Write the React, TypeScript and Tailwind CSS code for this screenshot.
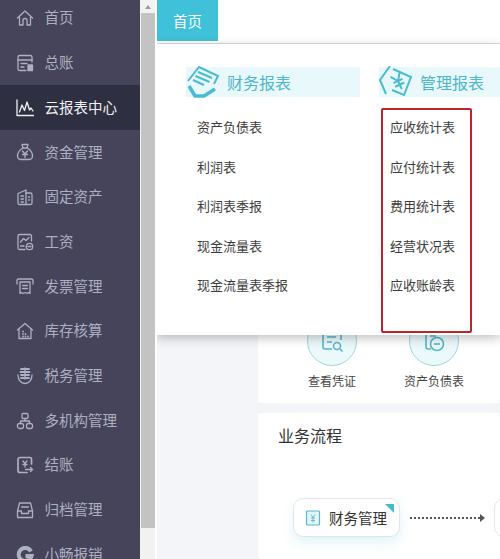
import React from "react";

const S = ({ children }: { children: React.ReactNode }) => (
  <svg width="18" height="18" viewBox="0 0 18 18" fill="none" stroke="currentColor" strokeWidth="1.3" strokeLinejoin="round" strokeLinecap="round">
    {children}
  </svg>
);

const navItems: { label: string; active?: boolean; icon: React.ReactNode }[] = [
  { label: "首页", icon: <S><path d="M1.5 9 9 2l7.5 7" /><path d="M3.5 8v8h3.5v-4.5a2 2 0 0 1 4 0V16h3.5V8" /></S> },
  { label: "总账", icon: <S><path d="M16 8V3a1.5 1.5 0 0 0-1.5-1.5h-11A1.5 1.5 0 0 0 2 3v12a1.5 1.5 0 0 0 1.5 1.5H10" /><path d="M2 6h14M5 9.5h6M5 13h3" /><rect x="12" y="11" width="4.5" height="5.5" fill="currentColor" /></S> },
  { label: "云报表中心", active: true, icon: <S><path d="M1 1v15.5h17" /><path d="M3.5 13 6 6l2.5 5.5L11 3l2.5 8 1.5-2 2 3" /></S> },
  { label: "资金管理", icon: <S><path d="M6 1.5h6L11 5H7z" /><path d="M7 5C3.5 7 1.5 10 1.5 13c0 2.5 2 3.5 4 3.5h7c2 0 4-1 4-3.5 0-3-2-6-5-8" /><path d="M6.5 8 9 11l2.5-3M6.5 11.5h5M9 11v3.5" /></S> },
  { label: "固定资产", icon: <S><path d="M2 5.5 10 2v14.5H3.5A1.5 1.5 0 0 1 2 15z" /><path d="M10 5h4.5A1.5 1.5 0 0 1 16 6.5V15a1.5 1.5 0 0 1-1.5 1.5H10" /><path d="M5 8h2.5M5 11h2.5M5 14h2.5M12.5 9h1M12.5 12h1" /></S> },
  { label: "工资", icon: <S><path d="M15.5 8V3A1.5 1.5 0 0 0 14 1.5H3.5A1.5 1.5 0 0 0 2 3v12a1.5 1.5 0 0 0 1.5 1.5H9" /><path d="m4.5 9 3-3.5 2.5 2L13 4.5M4.5 13H8" /><circle cx="13.5" cy="13.5" r="3.2" /><path d="M12 13.5h3" /></S> },
  { label: "发票管理", icon: <S><path d="M1 7V3.5A1.5 1.5 0 0 1 2.5 2h13A1.5 1.5 0 0 1 17 3.5V7" /><path d="M4 5h10v11.5l-1.5-1-1.5 1-2-1-2 1-1.5-1-1.5 1z" /><path d="M6.5 8.5h5M6.5 11.5h5" /></S> },
  { label: "库存核算", icon: <S><path d="M1.5 8 9 1.5 16.5 8" /><path d="M3 7.5V16.5h12V7.5" /><path d="M7 9.5h.01M7 12h.01M7 14.5h.01M9.5 12h.01M9.5 14.5h.01M12 14.5h.01" strokeWidth="1.8" /></S> },
  { label: "税务管理", icon: <S><path d="M2 8c0 5 3 8.500 7 8.500s7-3.500 7-8.500" /><path d="M5 2h8M4.500 5h9M5 8h8M5 11h8" strokeWidth="1.800" /><path d="M9 1v11" /></S> },
  { label: "多机构管理", icon: <S><rect x="6" y="1.5" width="6" height="5" rx="1" /><rect x="1.5" y="11.5" width="6" height="5" rx="2" /><rect x="10.5" y="11.5" width="6" height="5" rx="2" /><path d="M9 6.5v2.5M4.5 11.5V9h9v2.5" /></S> },
  { label: "结账", icon: <S><path d="M15.5 8V3A1.5 1.5 0 0 0 14 1.5H4A2 2 0 0 0 2 3.5v11a2 2 0 0 0 2 2h7" strokeWidth="1.7" /><path d="m7 5 2 2.5L11 5M7 8.5h4M9 7.5v3.5M9.5 13.5h7M14.5 11.5l2 2-2 2" /></S> },
  { label: "归档管理", icon: <S><path d="M3.5 2h11l2 8v6.5h-15V10z" /><path d="M1.5 10h4v2.5h7V10h4M5.5 6h7" /></S> },
  { label: "小畅报销", icon: <svg width="18" height="18" viewBox="0 0 18 18" fill="none" stroke="currentColor" strokeWidth="4"><path d="M15 5.5A6.500 6.500 0 1 0 15.500 10H9.500" /></svg> },
];

const reportA = ["资产负债表", "利润表", "利润表季报", "现金流量表", "现金流量表季报"];
const reportB = ["应收统计表", "应付统计表", "费用统计表", "经营状况表", "应收账龄表"];

function Sidebar() {
  return (
    <div className="w-[140px] shrink-0 bg-[#45445a] h-full overflow-hidden pt-[0.01px]">
      <div className="-mt-[4px]">
        {navItems.map((item) => (
          <div
            key={item.label}
            className={`h-[44.7px] flex items-center pl-[16px] gap-[10.5px] text-[14.5px] ${
              item.active ? "bg-[#2e2f40] text-[#eef0f4]" : "text-[#aeb0c0]"
            }`}
          >
            <span className="shrink-0">{item.icon}</span>
            <span className="-translate-y-[1px]">{item.label}</span>
          </div>
        ))}
      </div>
    </div>
  );
}

function Scrollbar() {
  return (
    <div className="w-[15px] shrink-0 h-full bg-[#f2f2f2] flex flex-col">
      <div className="h-[13px] flex items-center justify-center">
        <div className="w-0 h-0 border-x-[3px] border-x-transparent border-b-[4px] border-b-[#9a9a9a]" />
      </div>
      <div className="h-[515px] bg-[#c3c3c3] ml-[1px]" />
    </div>
  );
}

function ShelfIcon({ kind }: { kind: "a" | "b" }) {
  return (
    <svg width="34" height="32" viewBox="0 0 34 32" fill="none" stroke="#49bcd0" strokeWidth="2" className="shrink-0">
      {kind === "a" ? (
        <>
          <path d="M2 15 13 1l19 9-4 8" />
          <path d="M12 6l14 6M9.500 10l14 6M7 14l11 5" />
          <path d="M3 20l6 10h9l11-7" strokeWidth="3.500" strokeLinejoin="round" />
        </>
      ) : (
        <>
          <path d="M11 0 1 14l6 14" />
          <path d="M14 3l18 8-7 18-12-5" />
          <g transform="rotate(-25 19 15)">
            <path d="m14 8 5 7 5-7M14 15h10M14 19h10M19 15v9" />
          </g>
        </>
      )}
    </svg>
  );
}

function Dropdown() {
  return (
    <div className="absolute -left-[1px] right-0 top-[44px] h-[291px] bg-white shadow-[0_3px_10px_rgba(0,0,0,0.25)] flex pl-[30px] pt-[23px] text-[13px] text-[#3d3d3d]">
      <div className="w-[193px] shrink-0">
        <div className="w-[174px] h-[30px] bg-[#e9f8fb] flex items-center gap-[7px] text-[16px] text-[#4db6c9]">
          <ShelfIcon kind="a" />
          <span>财务报表</span>
        </div>
        <div className="pl-[11px] pt-[10px]">
          {reportA.map((t) => (
            <div key={t} className="h-[39.5px] flex items-center">{t}</div>
          ))}
        </div>
      </div>
      <div className="flex-1">
        <div className="h-[30px] bg-[#e9f8fb] flex items-center gap-[7px] text-[16px] text-[#4db6c9]">
          <ShelfIcon kind="b" />
          <span>管理报表</span>
        </div>
        <div className="mt-[12px] ml-[2px] w-[91px] h-[225px] -translate-y-[1px] border-2 border-[#c0232a] rounded-[2px] pl-[7px]">
          {reportB.map((t) => (
            <div key={t} className="h-[39.5px] flex items-center -translate-y-[3px]">{t}</div>
          ))}
        </div>
      </div>
    </div>
  );
}

function Shortcut({ label, icon }: { label: string; icon: React.ReactNode }) {
  return (
    <div className="w-[102px] shrink-0 flex flex-col items-center">
      <div className="w-[50px] h-[50px] rounded-full border border-[#9fd6dd] bg-[#ecf9fb] flex items-center justify-center">
        {icon}
      </div>
      <div className="mt-[6px] text-[12px] text-[#444]">{label}</div>
    </div>
  );
}

function Main() {
  return (
    <div className="relative flex-1 h-full overflow-hidden bg-[#f3f5f8] border-l-2 border-white">
      <div className="h-[44px] bg-white border-b border-[#dcdcdc]">
        <div className="w-[61px] h-[41px] bg-[#3fc1d9] text-white text-[14.5px] flex items-center justify-center">首页</div>
      </div>

      <div className="ml-[101px] mt-[-44px] pt-[300px]">
        <div className="bg-white h-[103px] pt-[16px] rounded-[4px] pl-[23px] flex">
          <Shortcut
            label="查看凭证"
            icon={
              <svg width="26" height="26" viewBox="0 0 26 26" fill="none" stroke="#55b7c9" strokeWidth="1.6">
                <path d="M4 4v15a2 2 0 0 0 2 2h7M22 4v8M8 9h9M8 14h5" />
                <circle cx="18" cy="18" r="3.5" />
                <path d="m21 21 2.5 2.5" />
              </svg>
            }
          />
          <Shortcut
            label="资产负债表"
            icon={
              <svg width="26" height="26" viewBox="0 0 26 26" fill="none" stroke="#55b7c9" strokeWidth="1.6">
                <path d="M5 4v15a2 2 0 0 0 2 2h3M20 4v3M9 8h6" />
                <circle cx="16" cy="16" r="6.5" />
                <path d="M13 16h6" />
              </svg>
            }
          />
        </div>
        <div className="bg-white mt-[10px] h-[146px] rounded-[4px] pl-[20px] pt-[10px]">
          <div className="text-[16px] text-[#333]">业务流程</div>
          <div className="mt-[51px] ml-[15px] flex items-center">
            <div className="relative w-[107px] h-[39px] shrink-0 rounded-[10px] border border-[#dfe7ea] bg-white shadow-[0_6px_12px_rgba(90,200,215,0.18)] flex items-center pl-[11px] gap-[8px] text-[14.5px] text-[#333] whitespace-nowrap overflow-hidden">
              <svg width="16" height="16" viewBox="0 0 16 16" fill="#e3f5f8" stroke="#5bb9c9" strokeWidth="1.2" className="shrink-0">
                <rect x="1.5" y="1" width="13" height="14" rx="1" />
                <path d="m6 4.5 2 3 2-3M6 8h4M6 10.5h4M8 7.5V12.5" fill="none" strokeWidth="0.9" />
              </svg>
              <span>财务管理</span>
              <div className="absolute right-[5px] top-[5px] w-0 h-0 border-t-[9px] border-t-[#45bccd] border-l-[9px] border-l-transparent" />
            </div>
            <div className="ml-[10px] w-[70px] shrink-0 border-t-2 border-dotted border-[#555]" />
            <div className="w-0 h-0 shrink-0 border-y-[4px] border-y-transparent border-l-[5px] border-l-[#555]" />
            <div className="ml-[9px] w-[60px] h-[39px] shrink-0 rounded-[10px] border border-[#dfe7ea] bg-white" />
          </div>
        </div>
      </div>

      <Dropdown />
    </div>
  );
}

export default function App() {
  return (
    <div
      className="w-[500px] h-[559px] flex overflow-hidden bg-white"
      style={{ fontFamily: '"Noto Sans CJK SC", "Noto Sans", sans-serif' }}
    >
      <Sidebar />
      <Scrollbar />
      <Main />
    </div>
  );
}
